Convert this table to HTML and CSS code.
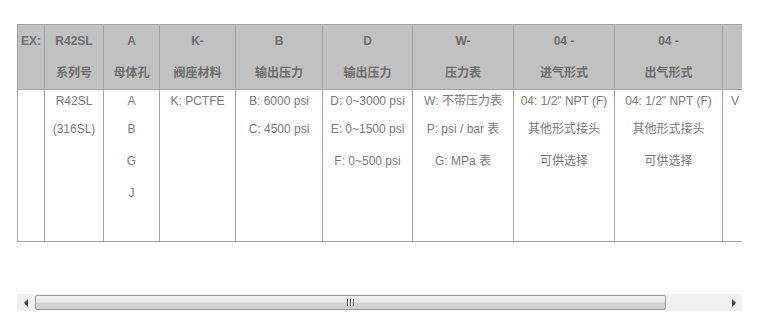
FILE: index.html
```html
<!DOCTYPE html>
<html>
<head>
<meta charset="utf-8">
<link rel="stylesheet" href="styles.css">
</head>
<body>
<div class="frame">
  <div class="viewport">
    <table class="spec">
      <colgroup>
        <col class="c-ex"><col class="c-ser"><col class="c-a"><col class="c-k"><col class="c-b"><col class="c-d"><col class="c-w"><col class="c-in"><col class="c-out"><col class="c-last">
      </colgroup>
      <thead>
        <tr>
          <th><div class="ln">EX:</div><div class="ln"></div></th>
          <th><div class="ln">R42SL</div><div class="ln">系列号</div></th>
          <th><div class="ln">A</div><div class="ln">母体孔</div></th>
          <th><div class="ln">K-</div><div class="ln">阀座材料</div></th>
          <th><div class="ln">B</div><div class="ln">输出压力</div></th>
          <th><div class="ln">D</div><div class="ln">输出压力</div></th>
          <th><div class="ln">W-</div><div class="ln">压力表</div></th>
          <th><div class="ln">04 -</div><div class="ln">进气形式</div></th>
          <th><div class="ln">04 -</div><div class="ln">出气形式</div></th>
          <th><div class="ln"></div><div class="ln"></div></th>
        </tr>
      </thead>
      <tbody>
        <tr>
          <td></td>
          <td><div class="first">R42SL</div><div class="ln">(316SL)</div></td>
          <td><div class="first">A</div><div class="ln">B</div><div class="ln">G</div><div class="ln">J</div></td>
          <td><div class="first">K: PCTFE</div></td>
          <td><div class="first">B: 6000 psi</div><div class="ln">C: 4500 psi</div></td>
          <td><div class="first">D: 0~3000 psi</div><div class="ln">E: 0~1500 psi</div><div class="ln">F: 0~500 psi</div></td>
          <td><div class="first">W: 不带压力表</div><div class="ln">P: psi / bar 表</div><div class="ln">G: MPa 表</div></td>
          <td><div class="first"><span class="code">04:</span> 1/2" NPT (F)</div><div class="ln">其他形式接头</div><div class="ln">可供选择</div></td>
          <td><div class="first"><span class="code">04:</span> 1/2" NPT (F)</div><div class="ln">其他形式接头</div><div class="ln">可供选择</div></td>
          <td class="left"><div class="first">V</div></td>
        </tr>
      </tbody>
    </table>
  </div>
  <div class="hscroll">
    <div class="arrow"><span class="tri-left"></span></div>
    <div class="track">
      <div class="thumb"><span class="grip"></span><span class="grip"></span><span class="grip"></span></div>
    </div>
    <div class="arrow"><span class="tri-right"></span></div>
  </div>
</div>
</body>
</html>
```
FILE: styles.css
```css
html, body {
  margin: 0;
  padding: 0;
  background: #ffffff;
}
body {
  font-family: "Liberation Sans", Arial, "Noto Sans CJK SC", sans-serif;
  font-size: 12px;
  color: #777777;
}
.frame {
  margin: 24px 0 0 17px;
  width: 725px;
}
.viewport {
  width: 725px;
  height: 270px;
  overflow: hidden;
}
.spec {
  border-collapse: collapse;
  table-layout: fixed;
  width: 836px;
  border-top: 1px solid #a4a4a4;
  border-left: 1px solid #a4a4a4;
}
.c-ex { width: 27px; }
.c-ser { width: 59px; }
.c-a { width: 56px; }
.c-k { width: 76px; }
.c-b { width: 87px; }
.c-d { width: 90px; }
.c-w { width: 101px; }
.c-in { width: 101px; }
.c-out { width: 108px; }
.c-last { width: 131px; }
.spec th, .spec td {
  border: 1px solid #a4a4a4;
  padding: 0;
  text-align: center;
  vertical-align: top;
  white-space: nowrap;
  overflow: hidden;
}
.spec th {
  background: #c1c1c1;
  color: #6e6e6e;
  font-weight: bold;
  height: 64px;
}
.spec th .ln {
  height: 32px;
  line-height: 32px;
}
.spec td {
  height: 151px;
  color: #7a7a7a;
}
.spec td .first {
  height: 23px;
  line-height: 23px;
}
.spec td .ln {
  height: 32px;
  line-height: 32px;
}
.spec td.left {
  text-align: left;
  padding-left: 8px;
}
.code {
  color: #8a7c6c;
}
.hscroll {
  display: flex;
  width: 725px;
  height: 17px;
  background: #f0f0f0;
}
.arrow {
  width: 17px;
  height: 17px;
  display: flex;
  align-items: center;
  justify-content: center;
  flex: none;
}
.tri-left {
  width: 0;
  height: 0;
  border-top: 4px solid transparent;
  border-bottom: 4px solid transparent;
  border-right: 4px solid #404040;
}
.tri-right {
  width: 0;
  height: 0;
  border-top: 4px solid transparent;
  border-bottom: 4px solid transparent;
  border-left: 4px solid #404040;
}
.track {
  flex: 1;
  padding: 1px 0 1px 1px;
}
.thumb {
  box-sizing: border-box;
  width: 631px;
  height: 15px;
  border: 1px solid #9a9a9a;
  border-radius: 2px;
  background: linear-gradient(to bottom, #f3f3f3 0%, #e6e6e6 45%, #d4d4d4 55%, #cfcfcf 100%);
  display: flex;
  align-items: center;
  justify-content: center;
  gap: 1px;
}
.grip {
  width: 1px;
  height: 7px;
  background: #555555;
  border-right: 1px solid #f6f6f6;
}
```
